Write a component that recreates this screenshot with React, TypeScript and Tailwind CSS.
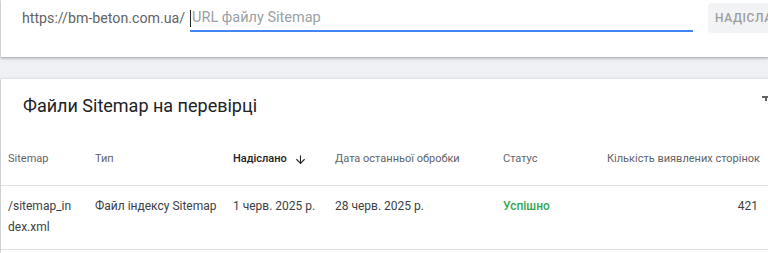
import { ArrowDown } from "lucide-react";

const font = { fontFamily: "Roboto, 'Noto Sans', sans-serif" };

export default function App() {
  return (
    <div className="w-[768px] h-[253px] overflow-hidden bg-[#eef0f4]" style={font}>
      {/* Submit bar */}
      <div className="ml-px h-[57px] bg-white shadow-[0_1px_2px_rgba(60,64,67,0.3),0_1px_3px_1px_rgba(60,64,67,0.15)] flex items-start overflow-hidden">
        <div className="flex items-start pl-[21px] pt-[7px] shrink-0">
          <span className="text-[14.2px] leading-[22px] text-[#5f6368] whitespace-nowrap">https://bm-beton.com.ua/</span>
          <div className="ml-[5px] w-[503px] h-[25px] border-b-2 border-[#4285f4] flex items-start shrink-0">
            <span className="w-px h-[17px] bg-[#202124] mt-[3px]" />
            <span className="ml-px text-[14.5px] leading-[22px] text-[#9aa0a6] whitespace-nowrap">URL файлу Sitemap</span>
          </div>
        </div>
        <div className="ml-[15px] mt-[3px] h-[30px] pl-[7px] pr-4 bg-[#f1f3f4] rounded flex items-center text-[12px] font-medium tracking-[0.6px] text-[#9e9e9e] whitespace-nowrap shrink-0">
          НАДІСЛАТИ
        </div>
      </div>

      {/* Sitemaps card */}
      <div className="mt-[22px] ml-px bg-white shadow-[0_1px_2px_rgba(60,64,67,0.3),0_1px_3px_1px_rgba(60,64,67,0.15)] h-[200px]">
        <div className="flex items-start justify-between h-[55px]">
          <h2 className="pl-[22px] pt-[15px] text-[18px] leading-[24px] text-[#202124]">Файли Sitemap на перевірці</h2>
          <svg width="6" height="10" viewBox="0 0 6 10" className="mt-[17px]">
            <rect x="0" y="0" width="6" height="2" fill="#5f6368" />
            <rect x="3" y="2" width="2" height="3" fill="#5f6368" />
          </svg>
        </div>
        <table className="table-fixed w-[767px] border-collapse">
          <colgroup>
            <col className="w-[86px]" />
            <col className="w-[138px]" />
            <col className="w-[102px]" />
            <col className="w-[168px]" />
            <col className="w-[106px]" />
            <col />
          </colgroup>
          <thead>
            <tr className="h-[51px] text-[11px] text-[#5f6368] border-b border-[#e0e0e0]">
              <th className="pl-[7px] text-left font-normal">Sitemap</th>
              <th className="pl-2 text-left font-normal">Тип</th>
              <th className="pl-2 text-left font-medium text-[#202124]">
                <span className="inline-flex items-center gap-[7px]">
                  Надіслано <ArrowDown className="w-[13px] h-[13px]" strokeWidth={2} />
                </span>
              </th>
              <th className="pl-2 text-left font-normal">Дата останньої обробки</th>
              <th className="pl-2 text-left font-normal">Статус</th>
              <th className="pr-[8px] text-right font-normal whitespace-nowrap">Кількість виявлених сторінок</th>
            </tr>
          </thead>
          <tbody>
            <tr className="text-[12px] leading-[21px] text-[#3c4043] border-b border-[#e0e0e0]">
              <td className="pl-[7px] pr-[14px] pt-[10px] pb-[11px] align-top break-all">/sitemap_index.xml</td>
              <td className="pl-2 pt-[10px] align-top whitespace-nowrap">Файл індексу Sitemap</td>
              <td className="pl-2 pt-[10px] align-top whitespace-nowrap">1 черв. 2025 р.</td>
              <td className="pl-2 pt-[10px] align-top whitespace-nowrap">28 черв. 2025 р.</td>
              <td className="pl-2 pt-[10px] align-top font-medium text-[#34a853]">Успішно</td>
              <td className="pr-[10px] pt-[10px] align-top text-right">421</td>
            </tr>
          </tbody>
        </table>
      </div>
    </div>
  );
}
